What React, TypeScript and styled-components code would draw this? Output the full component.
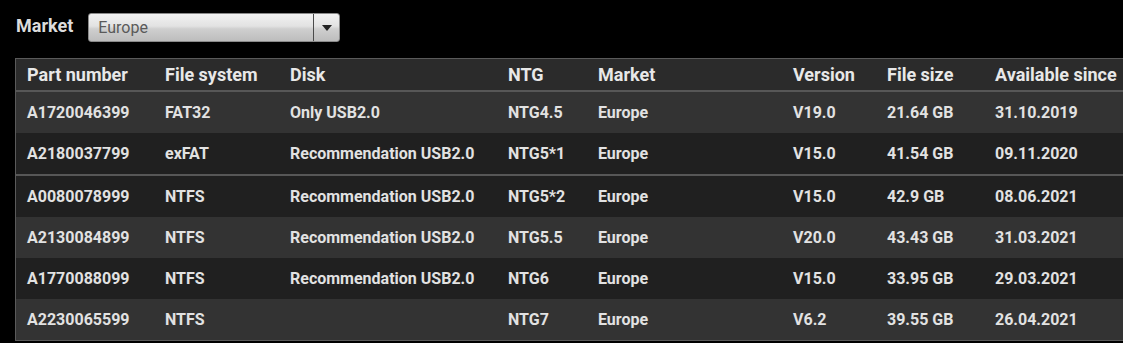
import styled, { createGlobalStyle } from "styled-components";

const GlobalStyle = createGlobalStyle`
  html, body {
    margin: 0;
    padding: 0;
    background: #000;
  }
  body {
    font-family: Roboto, "Liberation Sans", sans-serif;
  }
`;

type Row = {
  part: string;
  fs: string;
  disk: string;
  ntg: string;
  market: string;
  version: string;
  size: string;
  since: string;
  shade: "light" | "dark";
  groupStart?: boolean;
};

const rows: Row[] = [
  { part: "A1720046399", fs: "FAT32", disk: "Only USB2.0", ntg: "NTG4.5", market: "Europe", version: "V19.0", size: "21.64 GB", since: "31.10.2019", shade: "light" },
  { part: "A2180037799", fs: "exFAT", disk: "Recommendation USB2.0", ntg: "NTG5*1", market: "Europe", version: "V15.0", size: "41.54 GB", since: "09.11.2020", shade: "dark" },
  { part: "A0080078999", fs: "NTFS", disk: "Recommendation USB2.0", ntg: "NTG5*2", market: "Europe", version: "V15.0", size: "42.9 GB", since: "08.06.2021", shade: "dark", groupStart: true },
  { part: "A2130084899", fs: "NTFS", disk: "Recommendation USB2.0", ntg: "NTG5.5", market: "Europe", version: "V20.0", size: "43.43 GB", since: "31.03.2021", shade: "light" },
  { part: "A1770088099", fs: "NTFS", disk: "Recommendation USB2.0", ntg: "NTG6", market: "Europe", version: "V15.0", size: "33.95 GB", since: "29.03.2021", shade: "dark" },
  { part: "A2230065599", fs: "NTFS", disk: "", ntg: "NTG7", market: "Europe", version: "V6.2", size: "39.55 GB", since: "26.04.2021", shade: "light" },
];

const headers = ["Part number", "File system", "Disk", "NTG", "Market", "Version", "File size", "Available since"];

const Page = styled.div`
  padding: 13px 0 0 15px;
`;

const Toolbar = styled.div`
  display: flex;
  align-items: center;
  gap: 15px;
  height: 29px;
`;

const Label = styled.span`
  color: #dcdcdc;
  font-size: 18px;
  font-weight: 700;
  padding-left: 1px;
  margin-top: -5px;
`;

const Select = styled.div`
  display: flex;
  width: 252px;
  height: 29px;
  box-sizing: border-box;
  border: 1px solid #8a8a8a;
  border-radius: 3px;
  background: linear-gradient(#f2f2f2, #e2e2e2 45%, #cfcfcf 55%, #bdbdbd);
  overflow: hidden;
`;

const SelectValue = styled.div`
  flex: 1;
  display: flex;
  align-items: center;
  padding-left: 9px;
  color: #5a5a5a;
  font-size: 16px;
  border-right: 1px solid #4a4a4a;
`;

const SelectButton = styled.div`
  width: 25px;
  display: flex;
  align-items: center;
  justify-content: center;
`;

const Arrow = styled.span`
  width: 0;
  height: 0;
  border-left: 5px solid transparent;
  border-right: 5px solid transparent;
  border-top: 6px solid #222;
`;

const Table = styled.div`
  margin-top: 16px;
  width: 1107px;
  border: 1px solid #5a5a5a;
  background: #222;
`;

const Grid = styled.div<{ $shade: string; $sep?: boolean }>`
  display: grid;
  grid-template-columns: 138px 125px 218px 90px 195px 94px 108px 1fr;
  align-items: center;
  padding-left: 11px;
  background: ${(p) => p.$shade};
  border-top: ${(p) => (p.$sep ? "2px solid #575757" : "none")};
  white-space: nowrap;
`;

const HeaderRow = styled(Grid)`
  height: 31px;
  border-bottom: 2px solid #575757;
  color: #e8e8e8;
  font-size: 18px;
  font-weight: 700;
`;

const BodyRow = styled(Grid)`
  height: 41px;
  color: #e2e2e2;
  font-size: 16px;
  font-weight: 700;
`;

export default function App() {
  return (
    <Page>
      <GlobalStyle />
      <Toolbar>
        <Label>Market</Label>
        <Select>
          <SelectValue>Europe</SelectValue>
          <SelectButton>
            <Arrow />
          </SelectButton>
        </Select>
      </Toolbar>
      <Table>
        <HeaderRow $shade="#2b2b2b">
          {headers.map((h) => (
            <span key={h}>{h}</span>
          ))}
        </HeaderRow>
        {rows.map((r) => (
          <BodyRow key={r.part} $shade={r.shade === "light" ? "#333333" : "#202020"} $sep={r.groupStart}>
            <span>{r.part}</span>
            <span>{r.fs}</span>
            <span>{r.disk}</span>
            <span>{r.ntg}</span>
            <span>{r.market}</span>
            <span>{r.version}</span>
            <span>{r.size}</span>
            <span>{r.since}</span>
          </BodyRow>
        ))}
      </Table>
    </Page>
  );
}
